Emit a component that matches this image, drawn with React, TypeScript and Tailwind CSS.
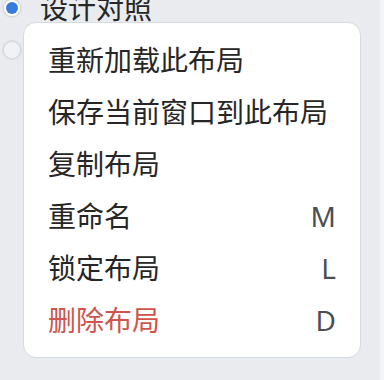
import React from "react";

const items = [
  { label: "重新加载此布局" },
  { label: "保存当前窗口到此布局" },
  { label: "复制布局" },
  { label: "重命名", key: "M" },
  { label: "锁定布局", key: "L" },
  { label: "删除布局", key: "D", danger: true },
];

function Radio({ checked }: { checked?: boolean }) {
  return (
    <span
      className={`w-5 h-5 rounded-full border-2 border-[#d8dbe1] flex items-center justify-center shrink-0 ${
        checked ? "bg-white" : "bg-[#f1f2f5]"
      }`}
    >
      {checked && <span className="w-3 h-3 rounded-full bg-[#3a7be0]" />}
    </span>
  );
}

export default function App() {
  return (
    <div
      className="relative w-[384px] h-[380px] overflow-hidden bg-[#e9ebef] flex"
      style={{ fontFamily: '"Noto Sans", "Noto Sans CJK SC", sans-serif' }}
    >
      <div className="flex-1 flex flex-col -mt-[13px] pl-[2px]">
        <div className="h-[42px] flex items-center gap-[18px]">
          <Radio checked />
          <span className="text-[28px] leading-none text-[#262626]">设计对照</span>
        </div>
        <div className="h-[42px] flex items-center">
          <Radio />
        </div>
      </div>
      <div className="w-[4px] bg-[#f3f4f6]" />

      <div className="absolute left-[23px] top-[22px] w-[338px] bg-white border-[1.5px] border-[#d6dae1] rounded-[13px] py-[11px] px-6">
        {items.map((it) => (
          <div key={it.label} className="h-[52px] flex items-center justify-between">
            <span className={`text-[28px] leading-none ${it.danger ? "text-[#cf544b]" : "text-[#262626]"}`}>
              {it.label}
            </span>
            {it.key && <span className="text-[28px] leading-none text-[#4a4f57]">{it.key}</span>}
          </div>
        ))}
      </div>
    </div>
  );
}
